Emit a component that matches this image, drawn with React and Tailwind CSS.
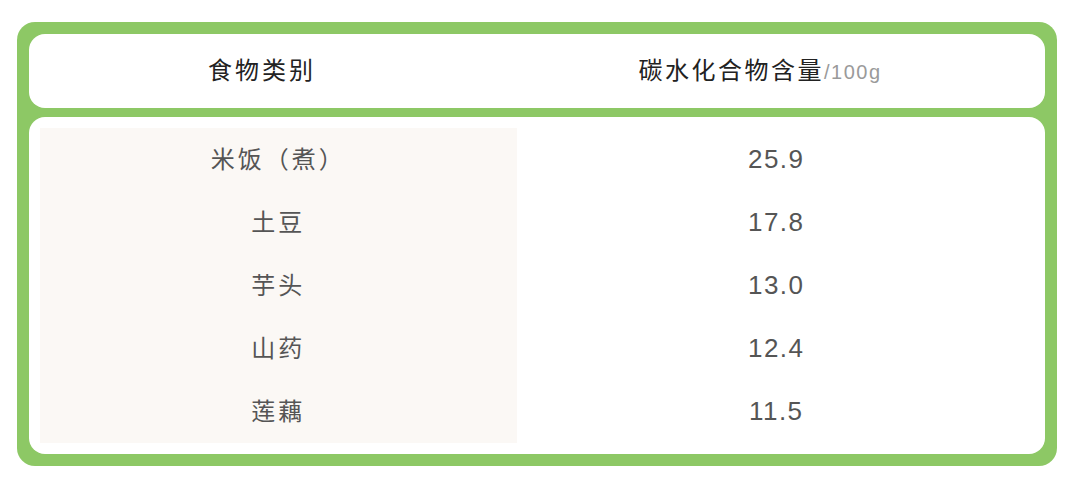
export default function App() {
  const rows = [
    ["米饭（煮）", "25.9"],
    ["土豆", "17.8"],
    ["芋头", "13.0"],
    ["山药", "12.4"],
    ["莲藕", "11.5"],
  ];
  return (
    <div
      className="w-[1068px] h-[486px] bg-white pt-[22px] pl-[17px]"
      style={{ fontFamily: '"Liberation Sans", "Noto Sans CJK SC", sans-serif' }}
    >
      <div className="w-[1040px] h-[444px] bg-[#8dc865] rounded-[18px] p-3 flex flex-col gap-[9px]">
        <div className="h-[74px] bg-white rounded-[16px] flex items-center">
          <div className="w-[466px] text-center text-[24px] tracking-[3px] text-[#222]">食物类别</div>
          <div className="w-[530px] text-center text-[24px] tracking-[2.5px] text-[#222]">
            碳水化合物含量<span className="text-[20px] tracking-[1.5px] text-[#9a9a9a]">/100g</span>
          </div>
        </div>
        <div className="flex-1 bg-white rounded-[16px] p-[11px] flex">
          <div className="w-[477px] bg-[#fbf8f5] flex flex-col">
            {rows.map(([n]) => (
              <div key={n} className="h-[63px] flex items-center justify-center text-[24px] tracking-[3px] text-[#555]">
                {n}
              </div>
            ))}
          </div>
          <div className="w-[518px] flex flex-col">
            {rows.map(([n, v]) => (
              <div key={n} className="h-[63px] flex items-center justify-center pl-[2px] text-[26px] tracking-[1.5px] text-[#555]">
                {v}
              </div>
            ))}
          </div>
        </div>
      </div>
    </div>
  );
}
